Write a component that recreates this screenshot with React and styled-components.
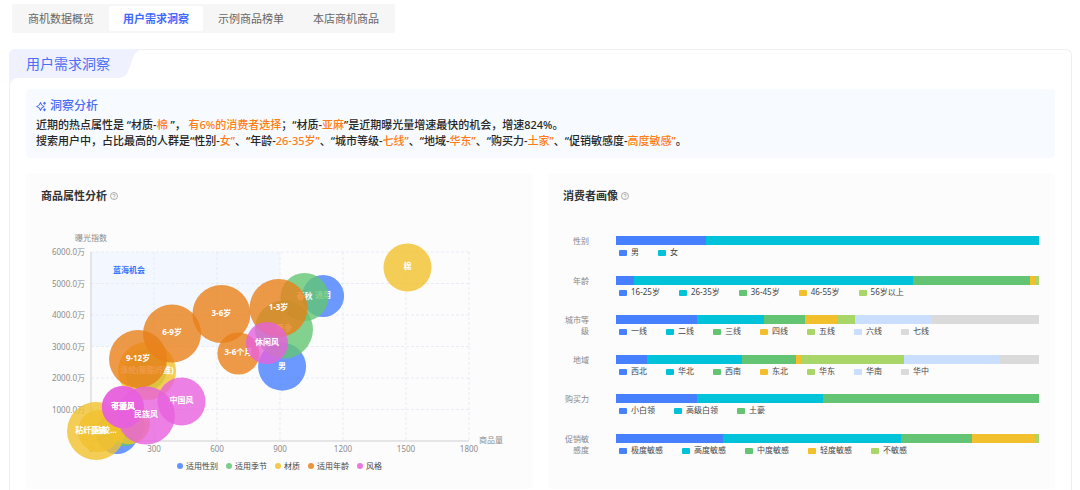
import React from "react";
import styled, { createGlobalStyle } from "styled-components";

const color = {
  blue: "#4680ff",
  cyan: "#00c3da",
  green: "#63c573",
  yellow: "#f1c02c",
  lime: "#a9d668",
  sky: "#cadeff",
  grey: "#dadada",
  orange: "#e98019",
  pink: "#e760dd",
};

const GlobalStyle = createGlobalStyle`
  * { box-sizing: border-box; }
  body {
    margin: 0;
    background: #fff;
    color: #262626;
    font-family: "Noto Sans", "Noto Sans CJK SC", sans-serif;
    font-size: 11px;
  }
  h2, h3, p, ul { margin: 0; padding: 0; font-weight: inherit; }
  ul { list-style: none; }
`;

const Page = styled.div`
  padding: 4px 8px 0 9px;
`;

const Tabs = styled.nav`
  display: inline-flex;
  gap: 1px;
  margin-left: 3px;
  padding: 2px;
  height: 29px;
  background: #f6f6f6;
  border-radius: 2px;
  vertical-align: top;
`;

const Tab = styled.button`
  border: 0;
  border-radius: 2px;
  padding: 0 14px;
  font: inherit;
  line-height: 24px;
  white-space: nowrap;
  background: ${(p) => (p.$active ? "#fff" : "transparent")};
  color: ${(p) => (p.$active ? "#3f68ff" : "#666")};
  font-weight: ${(p) => (p.$active ? 700 : 400)};
`;

const Panel = styled.section`
  margin-top: 16px;
  border: 1px solid #efeff1;
  border-bottom: 0;
  border-radius: 6px 6px 0 0;
  padding-bottom: 1px;
`;

const PanelTitle = styled.h2`
  position: relative;
  margin: -1px 0 0 -1px;
  padding-left: 17px;
  height: 30px;
  font-size: 14px;
  line-height: 30px;
  color: #4a6df5;
`;

const TitleShape = styled.svg`
  position: absolute;
  left: 0;
  top: 0;
`;

const TitleText = styled.span`
  position: relative;
`;

const PanelBody = styled.div`
  padding: 10px 16px 0;
`;

const Insight = styled.div`
  padding: 8px 10px 9px;
  background: #f7fbff;
  border-radius: 4px;
`;

const InsightTitle = styled.h3`
  display: flex;
  align-items: center;
  gap: 3px;
  margin-bottom: 2px;
  line-height: 18px;
  font-size: 12px;
  font-weight: 500;
  color: #4a6df5;
`;

const InsightLine = styled.p`
  line-height: 16px;
  font-weight: 500;
`;

const Mark = styled.span`
  color: #ff7d14;
`;

const Cards = styled.div`
  display: grid;
  grid-template-columns: 1fr 1fr;
  gap: 15px;
  margin-top: 15px;
`;

const Card = styled.section`
  display: flex;
  flex-direction: column;
  min-width: 0;
  background: #fcfcfc;
  border-radius: 4px;
  padding: 15px 0;
`;

const CardTitle = styled.h3`
  display: flex;
  align-items: center;
  gap: 3px;
  padding: 0 16px 0 15px;
  font-size: 11px;
  line-height: 16px;
  font-weight: 700;
  color: #333;
`;

const Plot = styled.svg`
  display: block;
  width: 100%;
  height: auto;
  overflow: visible;
  font-size: 8px;
`;

const SeriesLegend = styled.ul`
  position: relative;
  display: flex;
  justify-content: center;
  gap: 8px;
  font-size: 8px;
  line-height: 16px;
  color: #444;
`;

const SeriesItem = styled.li`
  display: flex;
  align-items: center;
  gap: 3px;

  &::before {
    content: "";
    width: 6px;
    height: 6px;
    border-radius: 50%;
    background: ${(p) => p.$color};
    opacity: 0.85;
  }
`;

const Profile = styled.div`
  flex: 1;
  display: flex;
  flex-direction: column;
  justify-content: space-between;
  padding: 31px 16px 18px;
  font-size: 8px;
`;

const ProfileRow = styled.div`
  display: flex;
  gap: 27px;
  height: 23px;
`;

const RowLabel = styled.div`
  flex: none;
  width: 25px;
  line-height: 11px;
  text-align: right;
  color: #888;
`;

const RowData = styled.div`
  flex: 1;
  padding-top: 1px;
`;

const Bar = styled.div`
  display: flex;
  height: 9px;
`;

const Segment = styled.div`
  flex: ${(p) => p.$share} 0 0;
  background: ${(p) => p.$color};
`;

const RowLegend = styled.ul`
  display: flex;
  gap: 19px;
  padding: 1px 0 0 3px;
  line-height: 12px;
  white-space: nowrap;
  color: #444;
`;

const RowItem = styled.li`
  display: flex;
  align-items: center;
  gap: 4px;

  &::before {
    content: "";
    width: 8px;
    height: 6px;
    margin-top: 2px;
    border-radius: 1px;
    background: ${(p) => p.$color};
  }
`;

const tabs = ["商机数据概览", "用户需求洞察", "示例商品榜单", "本店商机商品"];

/* x: goods count, y: exposure index in units of 万, r: bubble radius */
const series = [
  {
    name: "适用性别",
    fill: color.blue,
    points: [
      { x: 1105, y: 4603, r: 21, label: "通用" },
      { x: 910, y: 2360, r: 24, label: "男" },
      { x: 124, y: 254, r: 21, label: "女" },
    ],
  },
  {
    name: "适用季节",
    fill: color.green,
    points: [
      { x: 1017, y: 4571, r: 24, label: "春秋" },
      { x: 919, y: 3540, r: 29, label: "夏季" },
      { x: 260, y: 2254, r: 21, label: "四季" },
      { x: 157, y: 508, r: 21, label: "冬季" },
    ],
  },
  {
    name: "材质",
    fill: color.yellow,
    points: [
      { x: 1507, y: 5508, r: 24, label: "棉" },
      { x: 267, y: 2222, r: 29, label: "涤纶(聚酯纤维)" },
      { x: 181, y: 560, r: 21 },
      { x: 38, y: 317, r: 21, label: "亚麻" },
      { x: 24, y: 317, r: 29, label: "粘纤(粘胶..." },
    ],
  },
  {
    name: "适用年龄",
    fill: color.orange,
    points: [
      { x: 224, y: 2603, r: 29, label: "9-12岁" },
      { x: 386, y: 3413, r: 29, label: "6-9岁" },
      { x: 621, y: 4032, r: 29, label: "3-6岁" },
      { x: 893, y: 4222, r: 29, label: "1-3岁" },
      { x: 702, y: 2778, r: 21, label: "3-6个月" },
    ],
  },
  {
    name: "风格",
    fill: color.pink,
    points: [
      { x: 838, y: 3111, r: 21, label: "休闲风" },
      { x: 431, y: 1254, r: 24, label: "中国风" },
      { x: 262, y: 810, r: 29, label: "民族风" },
      { x: 152, y: 1079, r: 21, label: "可爱风" },
      { x: 152, y: 1079, r: 21, label: "卡通风" },
    ],
  },
];

const rank = [color.blue, color.cyan, color.green, color.yellow, color.lime, color.sky, color.grey];

const profile = [
  { label: "性别", items: [["男", 90], ["女", 333]] },
  {
    label: "年龄",
    items: [["16-25岁", 18], ["26-35岁", 279], ["36-45岁", 117], ["46-55岁", 5], ["56岁以上", 4]],
  },
  {
    label: "城市等级",
    items: [["一线", 81], ["二线", 67], ["三线", 41], ["四线", 32], ["五线", 18], ["六线", 77], ["七线", 107]],
  },
  {
    label: "地域",
    items: [["西北", 31], ["华北", 95], ["西南", 54], ["东北", 5], ["华东", 103], ["华南", 95], ["华中", 40]],
  },
  { label: "购买力", items: [["小白领", 81], ["高级白领", 126], ["土豪", 216]] },
  {
    label: "促销敏感度",
    items: [["极度敏感", 107], ["高度敏感", 179], ["中度敏感", 71], ["轻度敏感", 63], ["不敏感", 4]],
  },
];

const left = 65;
const top = 48;
const width = 378;
const height = 189;
const sx = (v) => left + (v / 1800) * width;
const sy = (v) => top + height - (v / 6000) * height;

function BubbleChart() {
  return (
    <Plot viewBox="0 0 507 254" role="img" aria-label="商品属性分析">
      <rect x={left} y={top} width={sx(900) - left} height={sy(3000) - top} fill="#f3f7ff" />
      <g stroke="#e8ebf5" strokeDasharray="3 2">
        {[1000, 2000, 3000, 4000, 5000, 6000].map((v) => (
          <line key={v} x1={left} x2={left + width} y1={sy(v)} y2={sy(v)} />
        ))}
        {[300, 600, 900, 1200, 1500, 1800].map((v) => (
          <line key={v} x1={sx(v)} x2={sx(v)} y1={top} y2={top + height} />
        ))}
      </g>
      <path d={`M${left} ${top}V${top + height}H${left + width}`} fill="none" stroke="#cfcfd4" />
      <g fill="#8c8c8c">
        <text x="49" y="37">曝光指数</text>
        <text x="453" y="239">商品量</text>
        {[1000, 2000, 3000, 4000, 5000, 6000].map((v) => (
          <text key={v} x={left - 6} y={sy(v) + 3} textAnchor="end">{v}.0万</text>
        ))}
        {[0, 300, 600, 900, 1200, 1500, 1800].map((v) => (
          <text key={v} x={sx(v)} y="248" textAnchor="middle">{v}</text>
        ))}
      </g>
      <text x="87" y="69" fill="#3370ff" fontWeight="700">蓝海机会</text>
      {series.map((s) => (
        <g key={s.name}>
          {s.points.map((p, i) => (
            <circle key={i} cx={sx(p.x)} cy={sy(p.y)} r={p.r} fill={s.fill} opacity="0.8" />
          ))}
          <g fill="#fff" fontWeight="700" textAnchor="middle">
            {s.points.map((p, i) => (
              <text key={i} x={sx(p.x)} y={sy(p.y) + 2}>{p.label}</text>
            ))}
          </g>
        </g>
      ))}
    </Plot>
  );
}

function HelpIcon() {
  return (
    <svg width="8" height="8" viewBox="0 0 16 16" fill="none" stroke="#8a8a8a" strokeWidth="1.4">
      <circle cx="8" cy="8" r="7" />
      <path d="M5.8 6.5a2.2 2.2 0 1 1 3.2 2c-.7.4-1 .7-1 1.5M8 11.3v1.4" />
    </svg>
  );
}

function SparkleIcon() {
  return (
    <svg width="11" height="11" viewBox="0 0 22 22" fill="none" stroke="#4a6df5" strokeWidth="2.2">
      <path d="M9 3C10 7.500 12 9.500 16 11C12 12.500 10 14.500 9 19C8 14.500 6 12.500 1.500 11C6 9.500 8 7.500 9 3Z" strokeLinejoin="round" />
      <path d="M17 1l3 3.500L17 8l-3-3.500zM17 14l3 3.500L17 21l-3-3.500z" fill="#4a6df5" stroke="none" />
    </svg>
  );
}

export default function App() {
  return (
    <>
      <GlobalStyle />
      <Page>
        <Tabs>
          {tabs.map((t, i) => (
            <Tab key={t} type="button" $active={i === 1}>{t}</Tab>
          ))}
        </Tabs>
        <Panel>
          <PanelTitle>
            <TitleShape width="135" height="38" viewBox="0 0 135 38" aria-hidden="true">
              <path
                d="M0 38V7Q0 0 7 0H135C128 1 126 4 124 9L120 20C118 26 115 29 108 29H9Q2 29 1 37Z"
                fill="#eff1ff"
              />
            </TitleShape>
            <TitleText>用户需求洞察</TitleText>
          </PanelTitle>
          <PanelBody>
            <Insight>
              <InsightTitle>
                <SparkleIcon />
                洞察分析
              </InsightTitle>
              <InsightLine>
                近期的热点属性是 “材质-<Mark>棉</Mark> ”， <Mark>有6%的消费者选择</Mark>；“材质-
                <Mark>亚麻</Mark>”是近期曝光量增速最快的机会，增速824%。
              </InsightLine>
              <InsightLine>
                搜索用户中，占比最高的人群是“性别-<Mark>女”</Mark>、“年龄-<Mark>26-35岁”</Mark>、“城市等级-
                <Mark>七线”</Mark>、“地域-<Mark>华东”</Mark>、“购买力-<Mark>土家”</Mark>、“促销敏感度-
                <Mark>高度敏感”</Mark>。
              </InsightLine>
            </Insight>
            <Cards>
              <Card>
                <CardTitle>
                  商品属性分析
                  <HelpIcon />
                </CardTitle>
                <BubbleChart />
                <SeriesLegend>
                  {series.map((s) => (
                    <SeriesItem key={s.name} $color={s.fill}>{s.name}</SeriesItem>
                  ))}
                </SeriesLegend>
              </Card>
              <Card>
                <CardTitle>
                  消费者画像
                  <HelpIcon />
                </CardTitle>
                <Profile>
                  {profile.map((row) => (
                    <ProfileRow key={row.label}>
                      <RowLabel>{row.label}</RowLabel>
                      <RowData>
                        <Bar>
                          {row.items.map(([name, share], i) => (
                            <Segment key={name} $share={share} $color={rank[i]} />
                          ))}
                        </Bar>
                        <RowLegend>
                          {row.items.map(([name], i) => (
                            <RowItem key={name} $color={rank[i]}>{name}</RowItem>
                          ))}
                        </RowLegend>
                      </RowData>
                    </ProfileRow>
                  ))}
                </Profile>
              </Card>
            </Cards>
          </PanelBody>
        </Panel>
      </Page>
    </>
  );
}
